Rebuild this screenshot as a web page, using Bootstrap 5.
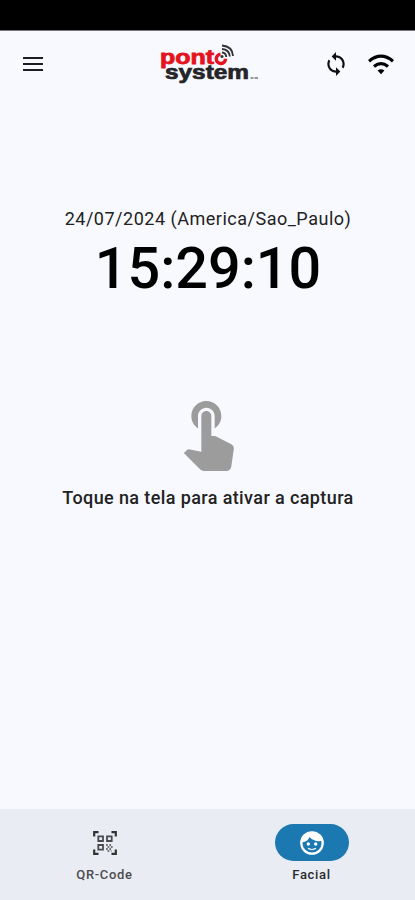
<!DOCTYPE html>
<html lang="pt-BR">
<head>
<meta charset="utf-8">
<meta name="viewport" content="width=device-width, initial-scale=1">
<title>Ponto System</title>
<link href="https://cdn.jsdelivr.net/npm/bootstrap@5.3.0/dist/css/bootstrap.min.css" rel="stylesheet">
<style>
body{background:#f8f9fe;font-family:Roboto,"Liberation Sans",sans-serif;color:#111}
.screen{height:900px;overflow:hidden}
.statusbar{height:31px;background:#000;border-bottom:1px solid #77777a}
.topbar{height:66px;padding:0 21px 0 20px}
.topbar svg,.dock svg,.touch svg{display:block}
.brand-logo{margin-left:104px}
.wifi{margin-left:19px}
.date{font-size:18px;line-height:22px;letter-spacing:.51px;margin-top:111px;padding-left:1px;color:#222}
.clock{font-size:57.500px;line-height:66px;font-weight:500;color:#000;margin-top:6px;padding-left:1px}
.touch{margin-top:89px}
.hint{font-size:18px;line-height:22px;font-weight:500;letter-spacing:.39px;margin-top:16px;padding-left:1px;color:#222}
.dock{height:91px;background:#e9ecf3;padding:15px 0 0 1px}
.pill{width:74px;height:37px}
.pill.on{background:#1c78b0}
.tab-label{font-size:13px;line-height:18px;font-weight:500;letter-spacing:.65px;margin-top:5px;color:#4c4c50}
.on + .tab-label{color:#2a2a2d}
</style>
<script src="https://cdn.jsdelivr.net/npm/bootstrap@5.3.0/dist/js/bootstrap.bundle.min.js"></script>
</head>
<body>
<div class="screen d-flex flex-column">
  <div class="statusbar flex-shrink-0"></div>
  <header class="topbar d-flex align-items-center flex-shrink-0">
    <svg width="26" height="26" viewBox="0 0 26 26" fill="none" stroke="#1d1d20" stroke-width="2"><path d="M3 7h20M3 13h20M3 19h20"/></svg>
    <svg class="brand-logo" width="120" height="50" viewBox="150 39 120 50">
      <g font-family="Liberation Sans,Arial,sans-serif" font-weight="700">
        <text x="160" y="63.500" font-size="20" fill="#e5131d" stroke="#e5131d" stroke-width=".8" textLength="54" lengthAdjust="spacingAndGlyphs">pont</text>
        <text x="165" y="78.500" font-size="20" fill="#252527" stroke="#252527" stroke-width=".7" textLength="84" lengthAdjust="spacingAndGlyphs">system</text>
      </g>
      <path d="M220.500 54.300a4.600 4.600 0 1 0 5 4.500" fill="none" stroke="#e5131d" stroke-width="3.500"/>
      <circle cx="222" cy="56.500" r="1.500" fill="#333"/>
      <g fill="none" stroke="#333" stroke-width="1.800"><path d="M222 52.500q4 .4 4.300 4.500M222 49q7.200.5 7.800 7.500M222 45.500q10.500.8 11 10.500"/></g>
      <path d="M250.500 78h3M254.500 78h3.500" stroke="#777" stroke-width="1.700"/>
    </svg>
    <svg class="ms-auto" width="26" height="26" viewBox="0 0 24 24" fill="#111"><path d="M12 4V1L8 5l4 4V6c3.31 0 6 2.69 6 6 0 1.01-.25 1.97-.7 2.8l1.46 1.46C19.54 15.03 20 13.57 20 12c0-4.42-3.58-8-8-8zm0 14c-3.31 0-6-2.69-6-6 0-1.01.25-1.97.7-2.8L5.24 7.74C4.46 8.97 4 10.43 4 12c0 4.42 3.58 8 8 8v3l4-4-4-4v3z"/></svg>
    <svg class="wifi" width="26" height="26" viewBox="0 0 26 26" fill="none" stroke="#000" stroke-width="3.200"><path d="M1 10.200Q13 .2 25 10.200M6 15.500Q13 9.800 20 15.500"/><path d="M9.600 19.500Q13 17 16.400 19.500L13 23.200Z" fill="#000" stroke="none"/></svg>
  </header>
  <main class="flex-grow-1 d-flex flex-column align-items-center">
    <div class="date text-nowrap">24/07/2024 (America/Sao_Paulo)</div>
    <div class="clock text-nowrap">15:29:10</div>
    <div class="touch">
      <svg width="80" height="80" viewBox="0 0 24 24" fill="#9c9c9c"><path d="M9 11.24V7.5C9 6.12 10.12 5 11.5 5S14 6.12 14 7.5v3.74c1.21-.81 2-2.18 2-3.74C16 5.01 13.99 3 11.5 3S7 5.01 7 7.5c0 1.56.79 2.93 2 3.74zm9.84 4.63l-4.54-2.26c-.17-.07-.35-.11-.54-.11H13v-6c0-.83-.67-1.5-1.5-1.5S10 6.67 10 7.5v10.74l-3.43-.72c-.08-.01-.15-.03-.24-.03-.31 0-.59.13-.79.33l-.79.8 4.94 4.94c.27.27.65.44 1.06.44h6.79c.75 0 1.33-.55 1.44-1.28l.75-5.27c.01-.07.02-.14.02-.2 0-.62-.38-1.16-.91-1.38z"/></svg>
    </div>
    <div class="hint text-nowrap">Toque na tela para ativar a captura</div>
  </main>
  <nav class="dock d-flex flex-shrink-0">
    <div class="w-50 d-flex flex-column align-items-center">
      <div class="pill rounded-pill d-flex align-items-center justify-content-center">
        <svg width="24" height="24" viewBox="0 0 24 24" fill="none" stroke="#4a4a4e" stroke-width="1.800">
          <path stroke="#333" stroke-width="2.200" d="M1.200 5.500V1.200h4.300M18.500 1.200h4.300v4.300M1.200 18.500v4.300h4.300M18.500 22.800h4.300v-4.300"/>
          <path d="M5.300 5.300h4.700v4.700H5.300zM14 5.300h4.700v4.700H14zM5.300 14h4.700v4.700H5.300z"/>
          <path stroke="#777" stroke-dasharray="1.8 1.500" d="M13 14h6.500M14.500 16h6M13 18h6.500M14.500 20h4"/>
        </svg>
      </div>
      <div class="tab-label">QR-Code</div>
    </div>
    <div class="w-50 d-flex flex-column align-items-center">
      <div class="pill on rounded-pill d-flex align-items-center justify-content-center">
        <svg width="26" height="26" viewBox="0 0 26 26">
          <circle cx="13" cy="13" r="10.700" fill="none" stroke="#fff" stroke-width="2.300"/>
          <path d="M3 12.500C7 12 9.500 10 10.500 7c2.500 3.300 7 4.600 12 4C22 5 18 2 13 2S3.500 6 3 12.500Z" fill="#fff"/>
          <circle cx="9.300" cy="14" r="1.700" fill="#fff"/><circle cx="16.700" cy="14" r="1.700" fill="#fff"/>
          <path d="M9 18.300q4 2.500 8 0" fill="none" stroke="#fff" stroke-width="1.100"/>
        </svg>
      </div>
      <div class="tab-label">Facial</div>
    </div>
  </nav>
</div>
</body>
</html>
